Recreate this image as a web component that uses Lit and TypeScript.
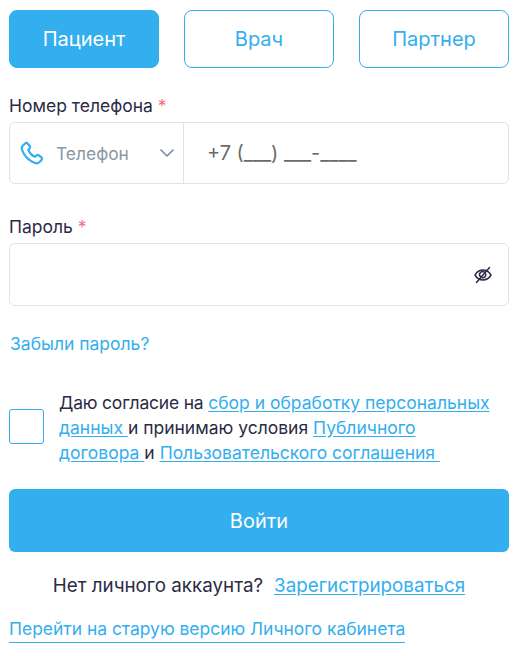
import { LitElement, html, css } from "lit";
import { customElement } from "lit/decorators.js";

@customElement("app-root")
export class AppRoot extends LitElement {
  static styles = css`
    :host {
      display: block;
      width: 520px;
      height: 656px;
      overflow: hidden;
      background: #fff;
      font-family: Inter, "Noto Sans", sans-serif;
      font-size: 17.5px;
      color: #2b2b45;
    }
    * { box-sizing: border-box; }
    .page { padding: 10px 11px 0 9px; display: flex; flex-direction: column; }
    .tabs { display: grid; grid-template-columns: repeat(3, 150px); gap: 25px; }
    .tab {
      height: 58px; border: 1px solid #33aeee; border-radius: 8px;
      display: flex; align-items: center; justify-content: center;
      font-size: 20px; color: #33aeee; background: #fff;
    }
    .tab.on { background: #33aeee; color: #fff; }
    .label { line-height: 20px; margin-top: 28px; height: 20px; margin-bottom: 6px; }
    .label.pw { margin-top: 33px; margin-bottom: 6px; }
    .label i { font-style: normal; color: #f4737e; }
    .field {
      border: 1px solid #e2e2e2; border-radius: 6px; display: flex; align-items: center;
      height: 62px;
    }
    .field.pass { height: 63px; justify-content: flex-end; padding-right: 16px; }
    .sel {
      width: 174px; height: 100%; border-right: 1px solid #e2e2e2; display: flex; align-items: center;
      padding-left: 9px; color: #8a97a5; font-size: 17.4px;
    }
    .sel span { margin-left: 11px; flex: 1; }
    .sel .chev { margin-right: 8px; }
    .mask { padding-left: 23px; color: #6a6a6a; font-size: 19.9px; }
    a { color: #33aeee; text-decoration: underline; text-underline-offset: 2px; }
    .forgot { color: #33aeee; margin-top: 28px; line-height: 20px; text-decoration: none; padding-left: 1px; }
    .consent { display: flex; align-items: flex-start; gap: 15px; margin-top: 36px; }
    .box { width: 35px; height: 35px; border: 1px solid #33aeee; border-radius: 3px; flex: none; margin-top: 19px; }
    .consent p { margin: 0; line-height: 25px; width: 435px; }
    .lead { letter-spacing: -0.2px; }
    .submit {
      height: 63px; margin-top: 24px; background: #33aeee; color: #fff; border-radius: 6px;
      display: flex; align-items: center; justify-content: center; font-size: 20px;
    }
    .reg { display: flex; justify-content: center; gap: 11px; margin-top: 24px; line-height: 20px; font-size: 18.8px; }
    .old { margin-top: 23px; line-height: 20px; font-size: 17.45px; }
    .old a { text-decoration: none; border-bottom: 1px solid #33aeee; padding-bottom: 3px; display: inline-block; line-height: 20px; }
  `;

  render() {
    return html`
      <div class="page">
        <div class="tabs">
          <div class="tab on">Пациент</div>
          <div class="tab">Врач</div>
          <div class="tab">Партнер</div>
        </div>
        <div class="label">Номер телефона <i>*</i></div>
        <div class="field">
          <div class="sel">
            <svg width="26" height="26" viewBox="0 0 24 24" fill="none" stroke="#33aeee" stroke-width="2" stroke-linecap="round" stroke-linejoin="round"><path d="M3.2 5.6 5.6 3.2a1.6 1.6 0 0 1 2.3 0l2 2.4a1.6 1.6 0 0 1-.1 2.2L8.6 9c1 2.7 3.4 5.4 6.3 6.5l1.300-1.200a1.600 1.600 0 0 1 2.200-.1l2.400 2a1.600 1.600 0 0 1 0 2.300l-2.100 2.100c-1 .9-2.500 1.100-3.900.6C9 19 5 15 3 9.600c-.5-1.400-.7-3 .2-4z"/></svg>
            <span>Телефон</span>
            <svg class="chev" width="16" height="10" viewBox="0 0 16 10" fill="none" stroke="#7d8ea0" stroke-width="1.7" stroke-linecap="round" stroke-linejoin="round"><path d="M2 2l6 6 6-6"/></svg>
          </div>
          <div class="mask">+7 (___) ___-____</div>
        </div>
        <div class="label pw">Пароль <i>*</i></div>
        <div class="field pass">
          <svg width="18" height="18" viewBox="0 0 18 18" fill="none" stroke="#2b2b45" stroke-width="1.5" stroke-linecap="round" stroke-linejoin="round"><path d="M1 9c2-3.400 4.700-5 8-5s6 1.600 8 5c-2 3.400-4.700 5-8 5s-6-1.600-8-5z"/><path d="M6.500 10.800A3 3 0 0 1 10.800 6.500M11.700 8a3 3 0 0 1-3.600 3.700"/><path d="M15.500 1.500 2.500 16.500"/></svg>
        </div>
        <a class="forgot">Забыли пароль?</a>
        <div class="consent">
          <div class="box"></div>
          <p><span class="lead">Даю согласие на </span><a>сбор и обработку персональных данных </a>и принимаю условия <a>Публичного договора </a>и <a>Пользовательского соглашения&nbsp;</a></p>
        </div>
        <div class="submit">Войти</div>
        <div class="reg"><span>Нет личного аккаунта?</span><a>Зарегистрироваться</a></div>
        <div class="old"><a>Перейти на старую версию Личного кабинета</a></div>
      </div>
    `;
  }
}
